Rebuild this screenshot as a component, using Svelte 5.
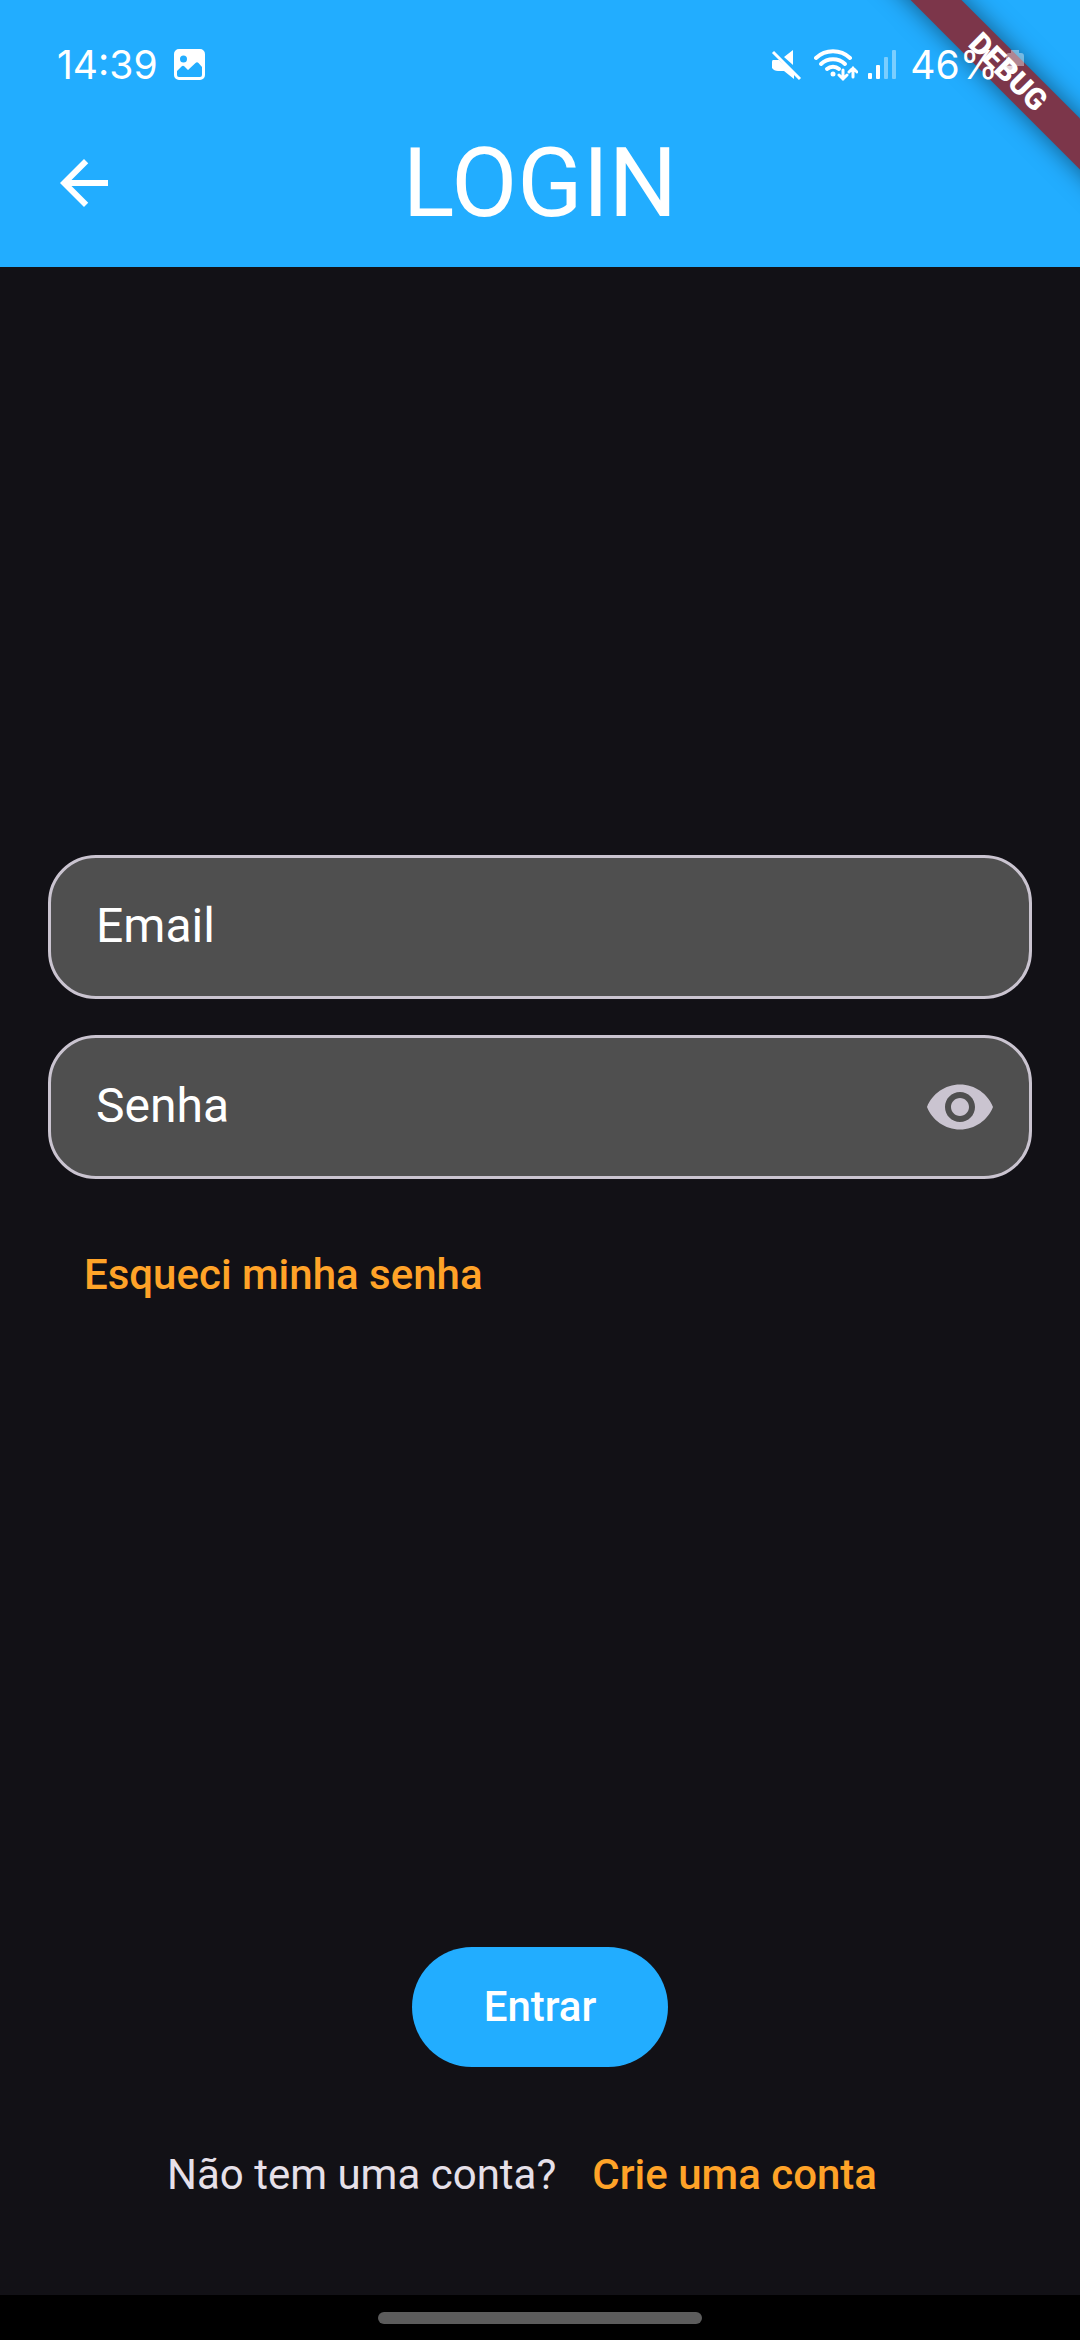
<script>
  let email = $state('');
  let password = $state('');
  let visible = $state(false);
</script>

<div class="screen">
  <header>
    <div class="banner-clip" aria-hidden="true"><span class="banner">DEBUG</span></div>
    <div class="status">
      <span class="clock">14:39</span>
      <svg class="photo" viewBox="0 0 31 31" aria-hidden="true">
        <path fill="currentColor" fill-rule="evenodd" d="M5 0h21a5 5 0 0 1 5 5v21a5 5 0 0 1-5 5H5a5 5 0 0 1-5-5V5a5 5 0 0 1 5-5ZM9.500 6.500a3.500 3.500 0 1 0 0 7 3.500 3.500 0 0 0 0-7ZM3 23v3a2 2 0 0 0 2 2h21a2 2 0 0 0 2-2v-8l-3.500-4a2 2 0 0 0-3 0L14 21l-3.500-3.500a2 2 0 0 0-3 0L3 22Z" />
      </svg>
      <span class="spacer"></span>
      <svg class="mute" viewBox="0 0 32 32" aria-hidden="true">
        <path fill="currentColor" d="M3 11h6l15 13v6l-10-8H8q-4 0-6-3v-6q0-2 1-2ZM14 8l9-7v15Z" />
        <path stroke="currentColor" stroke-width="3" d="M3 3 30 30" />
      </svg>
      <svg class="wifi" viewBox="0 0 44 34" aria-hidden="true">
        <g fill="none" stroke="currentColor" stroke-width="4" stroke-linecap="round">
          <path d="M2 10a25 25 0 0 1 34 0" />
          <path d="M7 16a17.500 17.500 0 0 1 24 0" />
          <path d="M13 21a9 9 0 0 1 12 0" />
          <path d="M29 22v9m-4-4 4 4 4-4M39 29V20m-4 4 4-4 4 4" stroke-width="3" />
        </g>
        <circle cx="19" cy="26" r="2.500" fill="currentColor" />
      </svg>
      <svg class="signal" viewBox="0 0 28 30" aria-hidden="true">
        <g fill="currentColor">
          <rect y="23" width="4" height="6" rx="1" />
          <rect x="8" y="15" width="4" height="14" rx="1" />
          <rect x="16" y="7" width="4" height="22" rx="1" opacity=".4" />
          <rect x="24" width="4" height="29" rx="1" opacity=".4" />
        </g>
      </svg>
      <span class="percent">46%</span>
      <svg class="battery" viewBox="0 0 18 30" aria-hidden="true">
        <path fill="currentColor" opacity=".4" d="M5 0h8v3h2q3 0 3 3v10H0V6q0-3 3-3h2Z" />
        <path fill="currentColor" opacity=".8" d="M0 16h10l-6 8q-4-1-4-4Z" />
      </svg>
    </div>
    <div class="toolbar">
      <button class="back" type="button" aria-label="Voltar">
        <svg viewBox="0 0 24 24"><path fill="currentColor" d="M20 11H7.830l5.590-5.590L12 4l-8 8 8 8 1.410-1.410L7.830 13H20v-2z" /></svg>
      </button>
      <h1>LOGIN</h1>
    </div>
  </header>

  <main>
    <form id="login" onsubmit={(e) => e.preventDefault()}>
      <div class="field">
        <input type="email" aria-label="Email" placeholder="Email" bind:value={email} />
      </div>
      <div class="field">
        <input type={visible ? 'text' : 'password'} aria-label="Senha" placeholder="Senha" bind:value={password} />
        <button class="eye" type="button" aria-label="Mostrar senha" onclick={() => (visible = !visible)}>
          <svg viewBox="0 0 24 24"><path fill="currentColor" d="M12 4.500C7 4.500 2.730 7.610 1 12c1.730 4.390 6 7.500 11 7.500s9.270-3.110 11-7.500c-1.730-4.390-6-7.500-11-7.500zM12 17c-2.760 0-5-2.240-5-5s2.240-5 5-5 5 2.240 5 5-2.240 5-5 5zm0-8c-1.660 0-3 1.340-3 3s1.340 3 3 3 3-1.340 3-3-1.340-3-3-3z" /></svg>
        </button>
      </div>
      <a class="forgot" href="#senha">Esqueci minha senha</a>
    </form>
    <footer>
      <button class="submit" type="submit" form="login">Entrar</button>
      <p>Não tem uma conta? <a href="#conta">Crie uma conta</a></p>
    </footer>
  </main>
  <div class="nav"><span></span></div>
</div>

<style>
  :global(body) {
    background: #121116;
  }
  .screen {
    display: flex;
    flex-direction: column;
    min-height: 100vh;
    background: #121116;
    color: #e6e0e9;
    font-family: Roboto, sans-serif;
    font-size: 42px;
    line-height: 60px;
  }
  button {
    padding: 0;
    border: 0;
    background: none;
    color: inherit;
    font: inherit;
    cursor: pointer;
  }
  svg {
    display: block;
    flex: none;
  }
  a {
    color: #ffa328;
    font-weight: 500;
    text-decoration: none;
  }
  header {
    position: relative;
    background: #22adff;
    color: #fff;
  }
  .banner-clip {
    position: absolute;
    top: 0;
    right: 0;
    width: 240px;
    height: 240px;
    overflow: hidden;
  }
  .banner {
    position: absolute;
    top: 54px;
    right: -168px;
    width: 480px;
    height: 36px;
    background: #7c364a;
    box-shadow: 0 0 24px rgb(0 0 0 / 50%);
    font-size: 30px;
    font-weight: 900;
    line-height: 36px;
    text-align: center;
    transform: rotate(45deg);
  }
  .status {
    position: relative;
    display: flex;
    align-items: center;
    height: 99px;
    padding: 30px 56px 0 57px;
    box-sizing: border-box;
    font-family: Inter, sans-serif;
    font-size: 39px;
    line-height: 48px;
  }
  .photo {
    width: 31px;
    margin-left: 16px;
  }
  .spacer {
    flex: 1;
  }
  .mute {
    width: 32px;
    margin-right: 12px;
  }
  .wifi {
    width: 44px;
    margin-right: 10px;
  }
  .signal {
    width: 28px;
    margin-right: 14px;
  }
  .battery {
    width: 18px;
    margin-left: 8px;
  }
  .toolbar {
    display: grid;
    grid-template-columns: 168px 1fr 168px;
    align-items: center;
    height: 168px;
  }
  .back {
    display: grid;
    place-items: center;
    height: 168px;
  }
  .back svg,
  .eye svg {
    width: 72px;
  }
  h1 {
    margin: 0;
    font-size: 96px;
    font-weight: 400;
    line-height: 120px;
    text-align: center;
  }
  main {
    flex: 1;
    display: flex;
    flex-direction: column;
    padding: 0 48px 48px;
  }
  form {
    flex: 1;
    display: flex;
    flex-direction: column;
    justify-content: center;
  }
  .field {
    display: flex;
    align-items: center;
    height: 144px;
    box-sizing: border-box;
    border: 3px solid #cac4d0;
    border-radius: 48px;
    background: #4f4f4f;
  }
  .field + .field {
    margin-top: 36px;
  }
  input {
    flex: 1;
    min-width: 0;
    height: 100%;
    box-sizing: border-box;
    padding: 0 45px 4px;
    border: 0;
    outline: 0;
    background: none;
    color: #fff;
    font: inherit;
    font-size: 48px;
  }
  input::placeholder {
    color: #fff;
    opacity: 1;
  }
  .eye {
    display: grid;
    place-items: center;
    width: 138px;
    height: 100%;
    color: #cac4d0;
  }
  .forgot {
    align-self: flex-start;
    margin-top: 24px;
    padding: 42px 36px;
  }
  footer {
    display: flex;
    flex-direction: column;
    align-items: center;
  }
  .submit {
    height: 120px;
    margin: 12px 0 36px;
    padding: 0 72px;
    border-radius: 60px;
    background: #22adff;
    color: #fff;
    font-weight: 500;
  }
  p {
    display: flex;
    align-items: center;
    margin: 0;
  }
  p a {
    padding: 42px 36px;
  }
  .nav {
    display: grid;
    place-items: center;
    height: 45px;
    background: #000;
  }
  .nav span {
    width: 30%;
    height: 12px;
    border-radius: 6px;
    background: #5c5c5c;
  }
</style>
